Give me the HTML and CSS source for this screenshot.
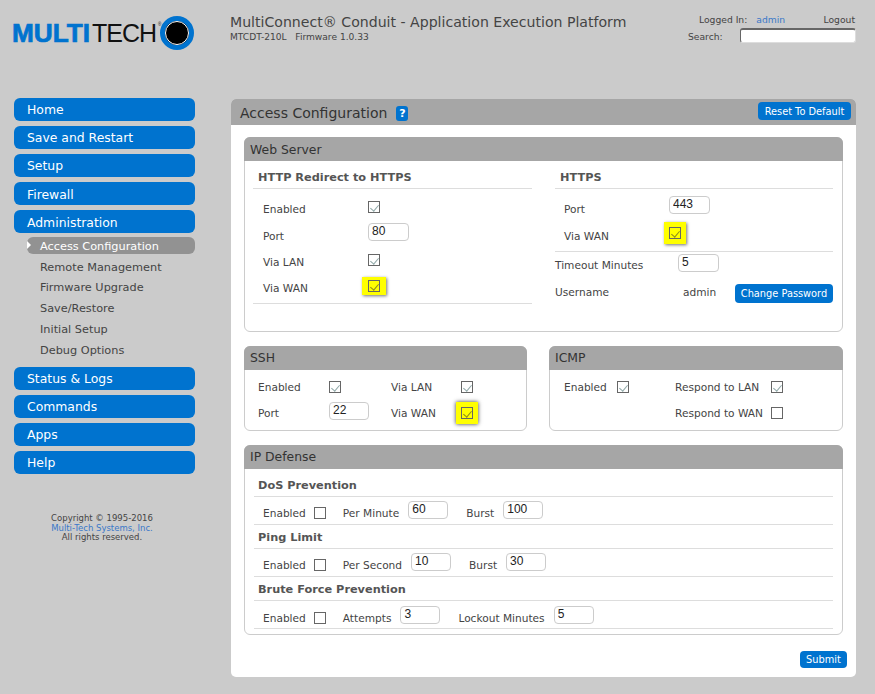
FILE: index.html
```html
<!DOCTYPE html>
<html lang="en">
<head>
  <meta charset="UTF-8" />
  <title>Access Configuration</title>
  <link rel="stylesheet" href="styles.css">
</head>
<body>

  <header class="top">
    <svg class="logo" width="195" height="52" viewBox="0 0 195 52">
      <text x="0" y="33" class="logo-multi" textLength="78" lengthAdjust="spacingAndGlyphs">MULTI</text>
      <text x="80" y="33" class="logo-tech">TECH</text>
      <text x="146" y="17" class="logo-reg">®</text>
      <circle cx="165" cy="24" r="14.5" fill="#000" stroke="#0073cf" stroke-width="5"/>
      <circle cx="165" cy="24" r="11.5" fill="#000" stroke="#fff" stroke-width="1"/>
    </svg>
    <div class="product">
      <div class="product-name">MultiConnect® Conduit - Application Execution Platform</div>
      <div class="product-sub">MTCDT-210L&nbsp;&nbsp; Firmware 1.0.33</div>
    </div>
    <div class="user">
      <div class="user-line user-login">
        <span>Logged In:</span>
        <a class="link user-name">admin</a>
        <span class="user-logout">Logout</span>
      </div>
      <div class="user-line">
        <span class="search-label">Search:</span>
        <input type="text" class="search" />
      </div>
    </div>
  </header>

  <div class="layout">
    <aside class="side">
      <nav>
        <a class="nav-item">Home</a>
        <a class="nav-item">Save and Restart</a>
        <a class="nav-item">Setup</a>
        <a class="nav-item">Firewall</a>
        <a class="nav-item">Administration</a>
        <div class="sub">
          <a class="sub-item active">Access Configuration</a>
          <a class="sub-item">Remote Management</a>
          <a class="sub-item">Firmware Upgrade</a>
          <a class="sub-item">Save/Restore</a>
          <a class="sub-item">Initial Setup</a>
          <a class="sub-item">Debug Options</a>
        </div>
        <a class="nav-item">Status &amp; Logs</a>
        <a class="nav-item">Commands</a>
        <a class="nav-item">Apps</a>
        <a class="nav-item">Help</a>
      </nav>
      <div class="copy">
        Copyright © 1995-2016<br />
        <a class="link">Multi-Tech Systems, Inc.</a><br />
        All rights reserved.
      </div>
    </aside>

    <main class="panel">
      <div class="panel-title">
        <h1>Access Configuration</h1>
        <span class="help">?</span>
        <button class="btn btn-reset">Reset To Default</button>
      </div>

      <div class="panel-body">
        <section class="box">
          <h2>Web Server</h2>
          <div class="web-cols">
            <div>
              <h3>HTTP Redirect to HTTPS</h3>
              <div class="rows">
                <div class="row"><label>Enabled</label><span class="chk on"></span></div>
                <div class="row"><label>Port</label><input class="num" value="80" /></div>
                <div class="row"><label>Via LAN</label><span class="chk on"></span></div>
                <div class="row row-last"><label>Via WAN</label><span class="hl"><span class="chk on"></span></span></div>
              </div>
            </div>
            <div>
              <h3>HTTPS</h3>
              <div class="rows rows-https">
                <div class="row"><label>Port</label><input class="num" value="443" /></div>
                <div class="row row-last"><label>Via WAN</label><span class="hl hl-big"><span class="chk on"></span></span></div>
              </div>
              <div class="row row-timeout"><label>Timeout Minutes</label><input class="num" value="5" /></div>
              <div class="row row-user"><label>Username</label><span>admin</span><button class="btn btn-pass">Change Password</button></div>
            </div>
          </div>
        </section>

        <div class="pair">
          <section class="box box-ssh">
            <h2>SSH</h2>
            <div class="opts">
              <label>Enabled</label><span class="chk on"></span>
              <label>Via LAN</label><span class="chk on"></span>
              <label>Port</label><input class="num" value="22" />
              <label>Via WAN</label><span class="hl hl-big hl-dark"><span class="chk on"></span></span>
            </div>
          </section>
          <section class="box box-icmp">
            <h2>ICMP</h2>
            <div class="opts">
              <label>Enabled</label><span class="chk on"></span>
              <label>Respond to LAN</label><span class="chk on"></span>
              <span></span><span></span>
              <label>Respond to WAN</label><span class="chk"></span>
            </div>
          </section>
        </div>

        <section class="box box-ip">
          <h2>IP Defense</h2>
          <div class="defense">
            <h3>DoS Prevention</h3>
            <div class="line">
              <label>Enabled</label><span class="chk"></span>
              <label>Per Minute</label><input class="num" value="60" />
              <label>Burst</label><input class="num" value="100" />
            </div>
            <h3>Ping Limit</h3>
            <div class="line">
              <label>Enabled</label><span class="chk"></span>
              <label>Per Second</label><input class="num" value="10" />
              <label>Burst</label><input class="num" value="30" />
            </div>
            <h3>Brute Force Prevention</h3>
            <div class="line">
              <label>Enabled</label><span class="chk"></span>
              <label>Attempts</label><input class="num" value="3" />
              <label>Lockout Minutes</label><input class="num" value="5" />
            </div>
          </div>
        </section>
      </div>

      <div class="panel-foot">
        <button class="btn btn-submit">Submit</button>
      </div>
    </main>
  </div>

</body>
</html>
```

FILE: styles.css
```css
* {
  box-sizing: border-box;
}

body {
  margin: 0;
  height: 694px;
  overflow: hidden;
  background: #cbcbcb;
  color: #444;
  font-family: "DejaVu Sans", Verdana, sans-serif;
  font-size: 10.6px;
}

.link {
  color: #3a78c9;
}

/* header */
.top {
  display: flex;
  height: 98px;
  padding-left: 12px;
}

.logo {
  margin-top: 9px;
  flex: none;
}

.logo-multi {
  font-family: "Liberation Sans", sans-serif;
  font-weight: bold;
  font-size: 25px;
  fill: #0073cf;
  stroke: #0073cf;
  stroke-width: 0.7px;
}

.logo-tech {
  font-family: "Liberation Sans", sans-serif;
  font-size: 25px;
  letter-spacing: -1px;
  fill: #111;
}

.logo-reg {
  font-family: "Liberation Sans", sans-serif;
  font-size: 4.5px;
  fill: #111;
}

.product {
  margin-left: 23px;
  padding-top: 13px;
}

.product-name {
  font-size: 14.1px;
  line-height: 18px;
}

.product-sub {
  font-size: 9.1px;
  line-height: 12px;
}

.user {
  margin-left: auto;
  margin-right: 19px;
  width: 168px;
  padding-top: 11px;
  font-size: 9.2px;
}

.user-line {
  display: flex;
  align-items: center;
}

.user-login {
  height: 16px;
  padding-left: 11px;
}

.user-name {
  margin-left: 9px;
}

.user-logout {
  margin-left: auto;
  margin-right: 1px;
}

.search-label {
  margin-top: 2px;
}

.search {
  margin-left: auto;
  width: 116px;
  height: 15px;
  margin-top: 1px;
  background: #fff;
  border: 1px solid;
  border-width: 2px 1px 1px 1px;
  border-color: #666 #ddd #ddd #666;
  border-radius: 3px;
}

/* sidebar + panel */
.layout {
  display: flex;
  padding-left: 14px;
}

.side {
  width: 181px;
  flex: none;
}

.nav-item {
  display: block;
  height: 23px;
  margin-bottom: 5px;
  padding-left: 13px;
  border-radius: 6px;
  background: #0073cf;
  color: #fff;
  font-size: 12.4px;
  line-height: 24px;
}

.nav-item:nth-child(4),
.nav-item:nth-child(5) {
  line-height: 26px;
}

.sub {
  margin: -1px 0 0 13px;
  padding-bottom: 4px;
}

.sub-item {
  display: block;
  position: relative;
  height: 17px;
  margin-bottom: 4px;
  padding-left: 13px;
  border-radius: 6px;
  font-size: 11.3px;
  line-height: 18px;
}

.sub-item:nth-child(-n+2) {
  line-height: 20px;
}

.sub-item.active {
  background: #929292;
  color: #fff;
}

.sub-item.active::before {
  content: "";
  position: absolute;
  left: 0;
  top: 4px;
  border-left: 4px solid #fff;
  border-top: 4.5px solid transparent;
  border-bottom: 4.5px solid transparent;
}

.copy {
  margin-top: 40px;
  padding-right: 5px;
  text-align: center;
  font-size: 8.5px;
  line-height: 9.5px;
}

.panel {
  width: 625px;
  height: 578px;
  margin-top: 1px;
  margin-left: 36px;
  background: #fff;
  border-radius: 5px;
}

.panel-title {
  display: flex;
  align-items: center;
  height: 26px;
  padding: 0 5px 0 9px;
  background: #a6a6a6;
  border-radius: 5px 5px 0 0;
}

.panel-title h1 {
  margin: 2px 0 0;
  font-size: 14px;
  font-weight: normal;
  color: #333;
}

.help {
  width: 12px;
  height: 15px;
  margin-left: 9px;
  margin-top: 2px;
  border-radius: 3px;
  background: #0073cf;
  color: #fff;
  font-size: 11px;
  font-weight: bold;
  line-height: 15px;
  text-align: center;
}

.btn {
  padding: 0;
  border: none;
  border-radius: 4px;
  background: #0073cf;
  color: #fff;
  font-family: inherit;
  font-size: 9.8px;
}

.btn-reset {
  margin-left: auto;
  margin-top: -2px;
  width: 93px;
  height: 18px;
}

.btn-pass {
  margin-left: auto;
  width: 98px;
  height: 19px;
}

.btn-submit {
  width: 47px;
  height: 17px;
}

.panel-body {
  padding: 12px 13px 0;
}

.panel-foot {
  display: flex;
  justify-content: flex-end;
  padding: 16px 9px 0;
}

/* boxes */
.box {
  border: 1px solid #ccc;
  border-radius: 6px;
}

.box h2 {
  margin: -1px -1px 0;
  height: 24px;
  padding-left: 6px;
  background: #a6a6a6;
  border-radius: 6px 6px 0 0;
  color: #333;
  font-size: 12.4px;
  font-weight: normal;
  line-height: 25px;
}

.pair h2,
.box-ip h2 {
  line-height: 23px;
}

.box h3 {
  margin: 0;
  padding: 9px 0 0 5px;
  height: 28px;
  border-bottom: 1px solid #ddd;
  font-size: 11.3px;
  font-weight: bold;
  line-height: 16px;
  color: #555;
}

.web-cols {
  display: grid;
  grid-template-columns: 279px 278px;
  gap: 23px;
  padding: 0 9px 21px 8px;
}

.rows {
  margin-top: 13px;
  padding-left: 10px;
  border-bottom: 1px solid #ddd;
}

.rows-https {
  padding-left: 9px;
}

.row {
  display: flex;
  align-items: flex-start;
  height: 26.5px;
  line-height: 16px;
}

.row label {
  width: 105px;
  flex: none;
}

.rows label {
  margin-top: -1px;
}

.rows .row:nth-child(4) label {
  margin-top: -2px;
}

.row .chk {
  margin-top: -1px;
}

.row .num {
  margin-top: -6px;
}

.row-last {
  height: 21.5px;
}

.rows-https .row-last {
  height: 22.5px;
}

.row-timeout {
  margin-top: 5px;
}

.row-timeout label {
  width: 123px;
}

.row-timeout .num {
  margin-top: -3px;
}

.row-user label {
  width: 128px;
}

.chk {
  display: block;
  position: relative;
  flex: none;
  width: 12px;
  height: 12px;
  border: 1px solid #666;
  background: #fff;
}

.chk.on::after {
  content: "";
  position: absolute;
  left: 3px;
  top: 1px;
  width: 4px;
  height: 7px;
  border: solid #8fa8a8;
  border-width: 0 1px 1px 0;
  transform: rotate(40deg);
}

/* yellow markers around the WAN checkboxes */
.hl {
  display: block;
  margin: -5px -6px;
  padding: 3px 6px;
  height: 18px;
  background: #ffff00;
  box-shadow: 1px 1px 3px rgba(0, 0, 0, 0.55);
}

.hl .chk {
  margin-top: 0;
  background: transparent;
}

.hl .chk.on::after {
  border-color: #8a8a20;
}

.hl-big {
  margin: -7px -5px;
  padding: 5px;
  height: 22px;
}

.hl-dark {
  box-shadow: 0 0 4px rgba(0, 0, 0, 0.8);
}

.num {
  width: 41px;
  height: 18px;
  padding: 0 0 2px 3px;
  border: 1px solid #ccc;
  border-radius: 4px;
  background: #fff;
  color: #222;
  font-family: "Liberation Sans", Arial, sans-serif;
  font-size: 12px;
}

.pair {
  display: flex;
  gap: 22px;
  margin-top: 14px;
}

.box-ssh {
  width: 283px;
}

.box-icmp {
  width: 294px;
}

.opts {
  display: grid;
  grid-template-rows: 26px 24px;
  padding-top: 10px;
  line-height: 16px;
}

.opts label {
  margin-top: -1px;
}

.opts .chk {
  margin-top: 1px;
}

.opts .num {
  margin-top: -4px;
}

.opts .hl {
  margin-top: -4px;
  margin-left: -5px;
  width: 22px;
}

.opts .hl .chk {
  margin-top: 0;
}

.box-ssh .opts {
  grid-template-columns: 71px 62px 70px 1fr;
  padding-left: 13px;
}

.box-ssh .num {
  width: 40px;
}

.box-icmp .opts {
  grid-template-columns: 53px 58px 96px 1fr;
  padding-left: 14px;
}

.box-ip {
  margin-top: 14px;
}

.defense {
  padding: 0 9px 5px;
}

.defense h3 {
  height: 24px;
  padding: 5px 0 0 4px;
}

.defense h3:first-child {
  height: 28px;
  padding-top: 9px;
}

.line {
  display: flex;
  height: 28px;
  padding: 8px 0 0 9px;
  border-bottom: 1px solid #ddd;
  line-height: 16px;
}

.line:last-child {
  padding-top: 9px;
}

.line label {
  margin-right: 9px;
}

.line label:first-child {
  margin-right: 8px;
}

.line .chk {
  margin: 2px 17px 0 0;
}

.line .num {
  width: 40px;
  margin: -4px 18px 0 0;
}
```
